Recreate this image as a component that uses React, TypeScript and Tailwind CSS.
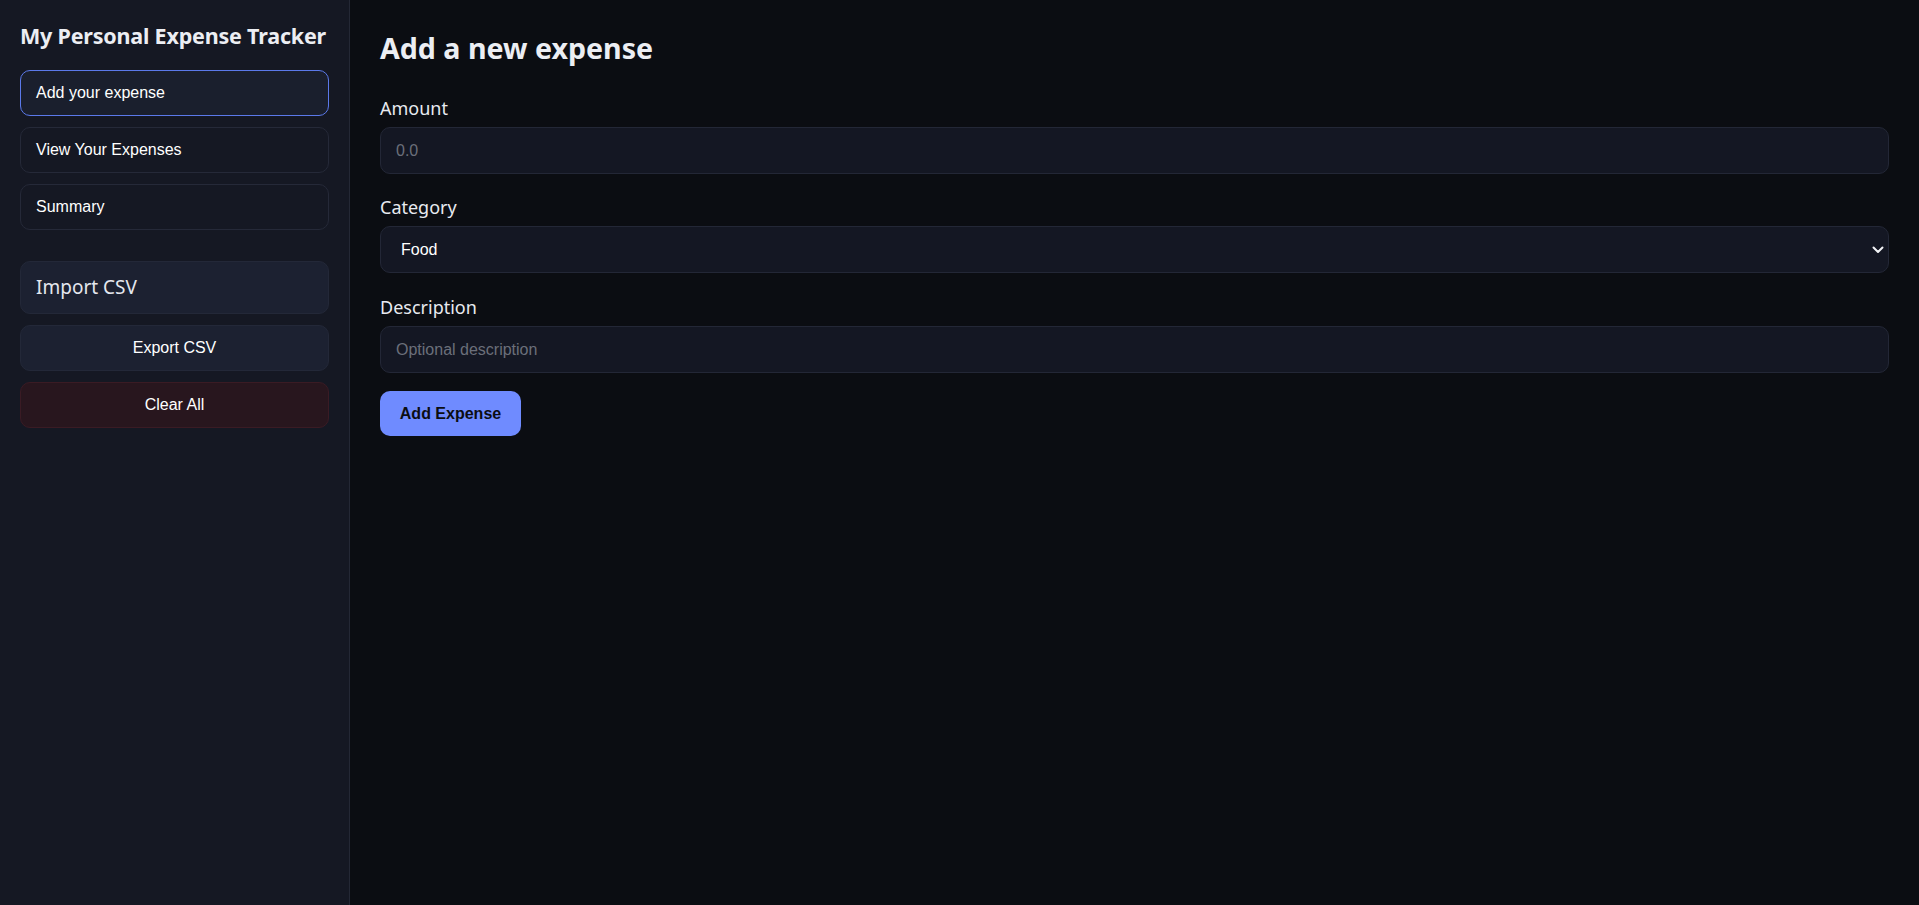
import React, { useState } from 'react';

const navItems = ['Add your expense', 'View Your Expenses', 'Summary'];

const labelCls = "block font-['Noto_Sans','Open_Sans',sans-serif] text-[18px] leading-[24px] text-[#e8eaf0]";
const fieldCls =
  'h-[47px] w-full rounded-[10px] border border-[#232736] bg-[#141723] px-[15px] text-[16px] text-white placeholder:text-[#6b6f7a] focus:outline-none';

export default function App() {
  const [active, setActive] = useState(0);
  const [category, setCategory] = useState('Food');

  return (
    <div className="flex min-h-[905px] w-full bg-[#0b0d12] font-['Liberation_Sans',Arial,sans-serif] text-[#e8eaf0]">
      <aside className="w-[350px] shrink-0 border-r border-[#242835] bg-[#151823] px-5 pt-[21px]">
        <h1 className="font-['Noto_Sans','Open_Sans',sans-serif] text-[21.5px] font-bold leading-[30px] tracking-[-0.2px] text-[#eceef3]">
          My Personal Expense Tracker
        </h1>

        <nav className="mt-[19px] flex flex-col gap-[11px]">
          {navItems.map((item, i) => (
            <button
              key={item}
              onClick={() => setActive(i)}
              className={
                i === active
                  ? 'h-[46px] rounded-[10px] border border-[#5b79ea] bg-[#1a1f2d] px-[15px] text-left text-[16px] text-white'
                  : 'h-[46px] rounded-[10px] border border-[#252938] bg-[#151823] px-[15px] text-left text-[16px] text-white'
              }
            >
              {item}
            </button>
          ))}
        </nav>

        <div className="mt-[31px] flex flex-col gap-[11px]">
          <label className="flex h-[53px] cursor-pointer items-center rounded-[10px] border border-[#232838] bg-[#1c2131] px-[15px] font-['Noto_Sans','Open_Sans',sans-serif] text-[19px] text-[#e4e7ee]">
            Import CSV
            <input type="file" accept=".csv" className="hidden" />
          </label>
          <button className="h-[46px] rounded-[10px] border border-[#232838] bg-[#1c2131] text-[16px] text-white">
            Export CSV
          </button>
          <button className="h-[46px] rounded-[10px] border border-[#3a1b24] bg-[#28161e] text-[16px] text-white">
            Clear All
          </button>
        </div>
      </aside>

      <main className="flex-1 px-[30px] pt-[28px]">
        <h2 className="font-['Noto_Sans','Open_Sans',sans-serif] text-[28.6px] font-bold leading-[40px] text-[#eceef3]">
          Add a new expense
        </h2>

        <div className="mt-[28px]">
          <label className={labelCls}>Amount</label>
          <input type="number" placeholder="0.0" className={'mt-[7px] ' + fieldCls} />
        </div>

        <div className="mt-[21px]">
          <label className={labelCls}>Category</label>
          <div className="relative mt-[7px]">
            <select
              value={category}
              onChange={(e) => setCategory(e.target.value)}
              className="h-[47px] w-full appearance-none rounded-[10px] border border-[#232736] bg-[#141723] px-[20px] text-[16px] text-white focus:outline-none"
            >
              <option>Food</option>
              <option>Transport</option>
              <option>Entertainment</option>
              <option>Bills</option>
              <option>Other</option>
            </select>
            <svg
              className="pointer-events-none absolute right-[5px] top-1/2 -translate-y-1/2"
              width="12"
              height="8"
              viewBox="0 0 12 8"
              fill="none"
            >
              <path d="M1.5 1.5 6 6l4.5-4.5" stroke="#f2f3f6" strokeWidth="2" strokeLinecap="round" strokeLinejoin="round" />
            </svg>
          </div>
        </div>

        <div className="mt-[22px]">
          <label className={labelCls}>Description</label>
          <input type="text" placeholder="Optional description" className={'mt-[7px] ' + fieldCls} />
        </div>

        <button className="mt-[18px] h-[45px] w-[141px] rounded-[10px] bg-[#6f8bff] text-[16px] font-bold text-[#0b0d12]">
          Add Expense
        </button>
      </main>
    </div>
  );
}
